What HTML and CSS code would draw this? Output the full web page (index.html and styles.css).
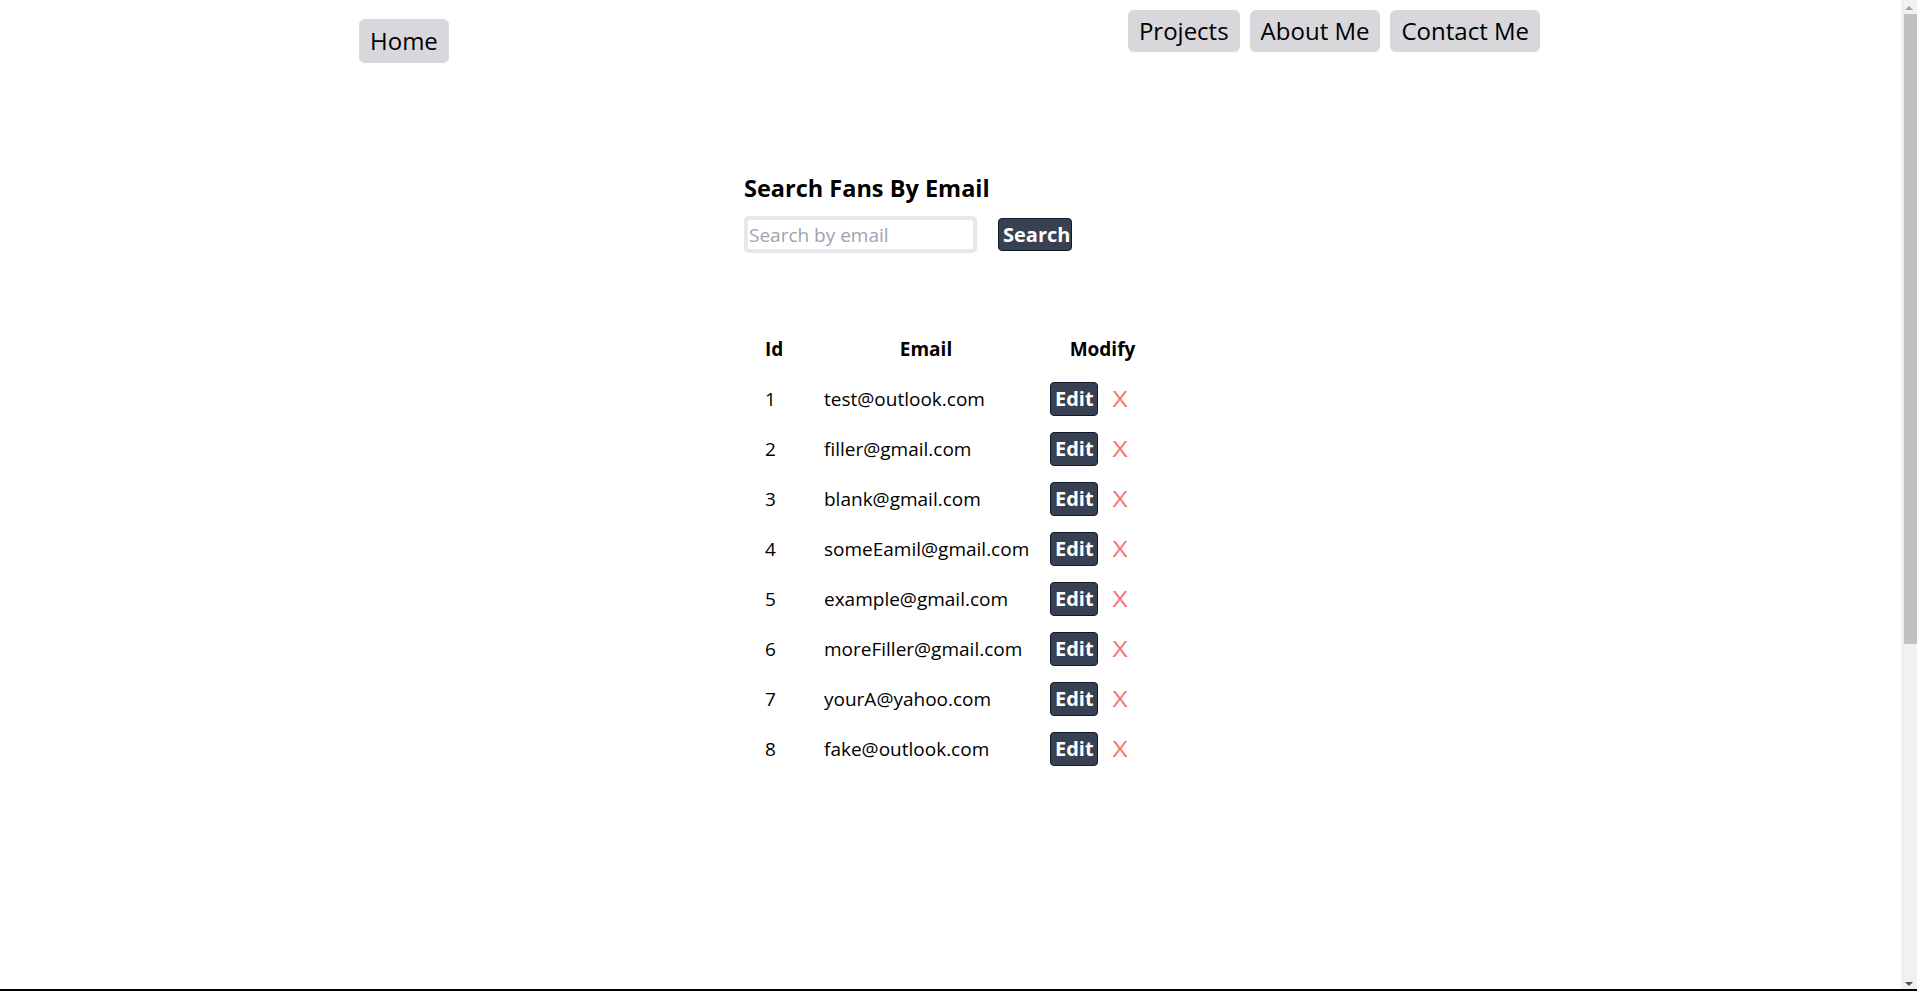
FILE: index.html
```html
<!DOCTYPE html>
<html lang="en">
<head>
<meta charset="utf-8">
<title>Fans</title>
<link rel="stylesheet" href="styles.css">
</head>
<body>
<header class="nav">
  <a class="nav-btn nav-home" href="#">Home</a>
  <nav class="nav-right">
    <a class="nav-btn" href="#">Projects</a>
    <a class="nav-btn" href="#">About Me</a>
    <a class="nav-btn" href="#">Contact Me</a>
  </nav>
</header>
<main class="content">
  <h2 class="title">Search Fans By Email</h2>
  <form class="search" onsubmit="return false">
    <input class="search-input" type="text" placeholder="Search by email">
    <button class="btn-dark search-btn" type="button">Search</button>
  </form>
  <table class="fans">
    <thead>
      <tr><th class="c-id">Id</th><th class="c-email">Email</th><th class="c-mod">Modify</th></tr>
    </thead>
    <tbody>
      <tr><td class="c-id">1</td><td class="c-email">test@outlook.com</td><td class="c-mod"><button class="btn-dark edit-btn">Edit</button><span class="del">X</span></td></tr>
      <tr><td class="c-id">2</td><td class="c-email">filler@gmail.com</td><td class="c-mod"><button class="btn-dark edit-btn">Edit</button><span class="del">X</span></td></tr>
      <tr><td class="c-id">3</td><td class="c-email">blank@gmail.com</td><td class="c-mod"><button class="btn-dark edit-btn">Edit</button><span class="del">X</span></td></tr>
      <tr><td class="c-id">4</td><td class="c-email">someEamil@gmail.com</td><td class="c-mod"><button class="btn-dark edit-btn">Edit</button><span class="del">X</span></td></tr>
      <tr><td class="c-id">5</td><td class="c-email">example@gmail.com</td><td class="c-mod"><button class="btn-dark edit-btn">Edit</button><span class="del">X</span></td></tr>
      <tr><td class="c-id">6</td><td class="c-email">moreFiller@gmail.com</td><td class="c-mod"><button class="btn-dark edit-btn">Edit</button><span class="del">X</span></td></tr>
      <tr><td class="c-id">7</td><td class="c-email">yourA@yahoo.com</td><td class="c-mod"><button class="btn-dark edit-btn">Edit</button><span class="del">X</span></td></tr>
      <tr><td class="c-id">8</td><td class="c-email">fake@outlook.com</td><td class="c-mod"><button class="btn-dark edit-btn">Edit</button><span class="del">X</span></td></tr>
    </tbody>
  </table>
</main>
<div class="scrollbar" aria-hidden="true">
  <span class="sb-arrow sb-up"></span>
  <span class="sb-thumb"></span>
  <span class="sb-arrow sb-down"></span>
</div>
<div class="bottom-line"></div>
</body>
</html>
```

FILE: styles.css
```css
body {
  margin: 0;
  padding-right: 18px;
  font-family: "Open Sans", "Noto Sans", sans-serif;
  color: #000;
  background: #fff;
}
.nav {
  width: 1181px;
  margin: 0 auto;
  padding-top: 10px;
  display: flex;
  justify-content: space-between;
  align-items: flex-start;
}
.nav-right {
  display: flex;
  gap: 10px;
}
.nav-btn {
  display: block;
  background: #d7d7dc;
  color: #000;
  text-decoration: none;
  font-size: 24px;
  line-height: 34px;
  padding: 4px 11px;
  border-radius: 6px;
}
.nav-home {
  margin-top: 9px;
  padding: 5px 11px;
}
.content {
  width: 411px;
  margin: 0 auto;
  padding-top: 109px;
}
.title {
  margin: 0;
  font-size: 23.5px;
  line-height: 32px;
  font-weight: 700;
}
.search {
  display: flex;
  align-items: center;
  gap: 21px;
  margin-top: 12px;
}
.search-input {
  box-sizing: border-box;
  width: 233px;
  height: 37px;
  border: 4px solid #e5e7eb;
  border-radius: 5px;
  padding: 0 1px;
  font-family: inherit;
  font-size: 19px;
  color: #000;
  outline: none;
}
.search-input::placeholder {
  color: #9ca3af;
}
.btn-dark {
  box-sizing: border-box;
  background: #374151;
  color: #fff;
  border: 1px solid #111827;
  border-radius: 4px;
  font-family: inherit;
  font-weight: 700;
  font-size: 20px;
  padding: 0 4px;
  cursor: pointer;
}
.search-btn {
  height: 33px;
  width: 74px;
  line-height: 31px;
}
.fans {
  margin-top: 71px;
  width: 411px;
  table-layout: fixed;
  border-collapse: collapse;
  font-size: 19px;
}
.fans th, .fans td {
  height: 50px;
  padding: 0 11px;
  vertical-align: middle;
  white-space: nowrap;
}
.fans th {
  font-weight: 700;
}
.fans .c-id {
  width: 69px;
  box-sizing: border-box;
  padding-left: 21px;
  text-align: left;
}
.fans .c-email {
  width: 226px;
  box-sizing: border-box;
  text-align: left;
}
.fans th.c-email {
  text-align: center;
}
.fans .c-mod {
  width: 116px;
  box-sizing: border-box;
  padding-right: 0;
  text-align: left;
}
.fans th.c-mod {
  text-align: center;
}
.edit-btn {
  width: 48px;
  height: 34px;
  line-height: 32px;
  vertical-align: middle;
}
.del {
  display: inline-block;
  color: #f87171;
  margin-left: 16px;
  font-size: 21px;
  transform: scaleX(1.25);
  vertical-align: middle;
}
.scrollbar {
  position: fixed;
  top: 0;
  right: 0;
  bottom: 0;
  width: 16px;
  background: #f1f1f1;
  display: flex;
  flex-direction: column;
  align-items: center;
}
.sb-thumb {
  display: block;
  width: 13px;
  height: 630px;
  margin-top: 4px;
  margin-left: 2px;
  background: #c1c1c1;
}
.sb-arrow {
  display: block;
  width: 0;
  height: 0;
  border-left: 4px solid transparent;
  border-right: 4px solid transparent;
}
.sb-up {
  margin-top: 6px;
  border-bottom: 4px solid #a3a3a3;
}
.sb-down {
  margin-top: auto;
  margin-bottom: 5px;
  border-top: 4px solid #505050;
}
.bottom-line {
  position: fixed;
  left: 0;
  right: 0;
  bottom: 0;
  height: 2px;
  background: #000;
}
```
